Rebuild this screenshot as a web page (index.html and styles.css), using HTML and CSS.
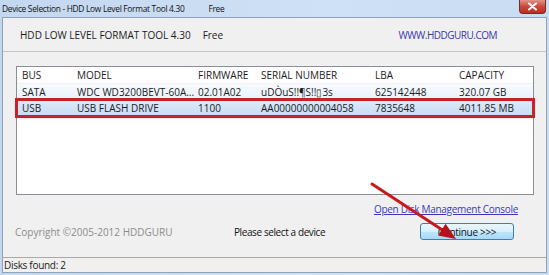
FILE: index.html
```html
<!DOCTYPE html>
<html lang="en">
<head>
  <meta charset="UTF-8">
  <meta name="viewport" content="width=device-width, initial-scale=1.0">
  <title>Device Selection</title>
  <link rel="stylesheet" href="styles.css">
</head>
<body>
  <div class="window">
    <div class="titlebar">
      <span class="title">Device Selection - HDD Low Level Format Tool 4.30</span>
      <span class="title-free">Free</span>
      <button class="close">
        <svg width="11" height="9" viewBox="0 0 11 9"><path d="M2 1.5 L9 7.5 M9 1.5 L2 7.5" stroke="#fff" stroke-width="2" stroke-linecap="round"/></svg>
      </button>
    </div>
    <div class="frame">
      <div class="banner">
        <span class="product">HDD LOW LEVEL FORMAT TOOL 4.30<span class="free">Free</span></span>
        <a class="site">WWW.HDDGURU.COM</a>
      </div>
      <div class="content">
        <div class="list">
          <div class="row head">
            <div>BUS</div><div>MODEL</div><div>FIRMWARE</div><div>SERIAL NUMBER</div><div>LBA</div><div>CAPACITY</div>
          </div>
          <div class="row hot">
            <div>SATA</div><div>WDC WD3200BEVT-60A...</div><div>02.01A02</div><div>uDÒuS!!¶S!!▯3s</div><div>625142448</div><div>320.07 GB</div>
          </div>
          <div class="row selected">
            <div>USB</div><div>USB FLASH DRIVE</div><div>1100</div><div>AA00000000004058</div><div>7835648</div><div>4011.85 MB</div>
          </div>
        </div>
        <div class="link-row">
          <a class="console">Open Disk Management Console</a>
        </div>
        <div class="bottom-row">
          <span class="copyright">Copyright ©2005-2012 HDDGURU</span>
          <span class="hint">Please select a device</span>
          <button class="continue">Continue &gt;&gt;&gt;</button>
        </div>
      </div>
      <div class="status">Disks found: 2</div>
    </div>
    <!-- annotation arrow drawn over the dialog -->
    <svg class="arrow" width="549" height="275" viewBox="0 0 549 275">
      <line x1="372" y1="184" x2="442" y2="229.7" stroke="#c8191c" stroke-width="3" stroke-linecap="round"/>
      <polygon points="456,239 438,235.6 445.6,223.8" fill="#b5121a"/>
    </svg>
  </div>
</body>
</html>
```
FILE: styles.css
```css
*{
  box-sizing: border-box;
}
body{
  margin: 0;
  width: 549px;
  height: 275px;
  overflow: hidden;
  font-family: "Open Sans", "Noto Sans", sans-serif;
  font-size: 10px;
  color: #1b1b1b;
}
.window{
  position: relative;
  height: 275px;
  display: flex;
  flex-direction: column;
  background: linear-gradient(90deg, #c3d7ef, #cfe1f6 60%, #c9dcf2);
}
.titlebar{
  height: 17px;
  display: flex;
  align-items: center;
  padding-left: 2px;
  font-size: 8.4px;
  letter-spacing: -0.3px;
  color: #111;
}
.title-free{
  margin-left: 24px;
}
.close{
  margin-left: auto;
  margin-right: 3px;
  align-self: flex-start;
  width: 27px;
  height: 14px;
  padding: 0;
  border: 1px solid #7a2a24;
  border-top: none;
  border-radius: 0 0 4px 4px;
  background: linear-gradient(#e0938a, #c8493c 50%, #b8301f);
  display: flex;
  align-items: center;
  justify-content: center;
}
.frame{
  flex: 1;
  margin: 0 2px 2px 2px;
  border: 1px solid #8ea2b8;
  background: #f0f0f0;
  display: flex;
  flex-direction: column;
}
.banner{
  height: 34px;
  display: flex;
  align-items: center;
  justify-content: space-between;
  padding: 0 49px 0 17px;
  border-bottom: 1px solid #c4c4c4;
  font-size: 10px;
}
.free{
  margin-left: 12px;
}
.site{
  color: #3838aa;
  letter-spacing: -0.5px;
}
.content{
  flex: 1;
  padding: 14px 12px 0 13px;
  display: flex;
  flex-direction: column;
}
.list{
  height: 129px;
  border: 1px solid #8a8e96;
  background: #fff;
}
.row{
  display: grid;
  grid-template-columns: 55px 121px 63px 114px 84px 1fr;
  height: 16px;
  align-items: center;
  font-size: 10px;
}
.row div{
  padding-left: 5px;
  white-space: nowrap;
}
.head{
  height: 17px;
  border-bottom: 1px solid #eef0f3;
}
.hot{
  background: linear-gradient(#f7fafe, #e9f1fb);
}
.selected{
  background: linear-gradient(#dceafb, #c8dcf4);
  outline: 3px solid #c4232b;
  outline-offset: -1px;
  box-shadow: 0 1px 3px rgba(60, 0, 0, 0.45);
}
.link-row{
  display: flex;
  justify-content: flex-end;
  padding-right: 16px;
  margin-top: 7px;
  line-height: 14px;
}
.console{
  color: #3a3ac0;
  text-decoration: underline;
  letter-spacing: -0.3px;
}
.bottom-row{
  display: flex;
  align-items: center;
  margin-top: 7px;
}
.copyright{
  width: 219px;
  margin-left: -1px;
  color: #8c8c8c;
}
.hint{
  flex: 1;
  color: #111;
  letter-spacing: -0.4px;
}
.continue{
  width: 94px;
  height: 17px;
  margin-right: 20px;
  padding: 0;
  border: 1px solid #3c7fb1;
  border-radius: 3px;
  background: linear-gradient(#eaf6fd, #d9f0fc 50%, #bee6fd 51%, #a7d9f5);
  font-family: inherit;
  font-size: 10px;
  letter-spacing: -0.3px;
  color: #111;
}
.status{
  height: 15px;
  border-top: 1px solid #a9a9a9;
  padding-left: 1px;
  display: flex;
  align-items: center;
  font-size: 10px;
  letter-spacing: -0.3px;
  background: #f2f0ef;
}
.arrow{
  position: absolute;
  left: 0;
  top: 0;
  pointer-events: none;
}
```
